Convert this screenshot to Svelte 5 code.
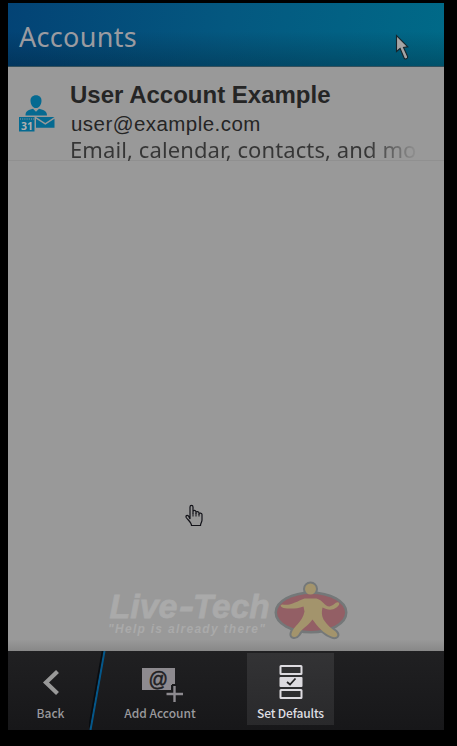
<script>
  const account = {
    name: 'User Account Example',
    email: 'user@example.com',
    services: 'Email, calendar, contacts, and mo'
  };
</script>

<div class="screen">
  <div class="phone">
    <header><h1>Accounts</h1></header>
    <main>
      <section class="account">
        <svg class="acct-icon" width="36" height="38" viewBox="0 0 36 38" fill="#056a91">
          <path d="M17 .3c3.500 0 5.700 2.300 5.500 5.600-.2 3.600-2.200 7.100-5.500 7.100s-5.300-3.500-5.500-7.100C11.300 2.600 13.500.3 17 .3z" />
          <path d="M6.500 20.500c0-4.500 2.500-5.500 7.500-6.800l3 3 3-3c5 1.300 8 2.300 8 6.800z" />
          <path d="M0 22h15.500v14.500H0z" />
          <path d="M17 22h18.500l-9.200 6z" />
          <path d="M17 23.800l9.300 6 9.200-6v9H17z" />
          <path d="M1 24h14" stroke="#999" stroke-width="1.200" stroke-dasharray="1 1.200" />
          <text x="2" y="34.500" textLength="12" lengthAdjust="spacingAndGlyphs" font-family="Open Sans, sans-serif" font-size="11" font-weight="700" fill="#b0b0b0">31</text>
        </svg>
        <div class="info">
          <div class="name">{account.name}</div>
          <div class="email">{account.email}</div>
          <div class="services">{account.services}</div>
        </div>
      </section>
      <svg class="brand" width="244" height="62" viewBox="0 0 244 62">
        <g font-family="Liberation Sans, Arial, sans-serif" font-weight="700" font-style="italic" fill="#aaa">
          <text x="3.500" y="38.500" font-size="34" textLength="68" lengthAdjust="spacingAndGlyphs" stroke="#aaa" stroke-width=".8">Live</text>
          <text x="73" y="38.500" font-size="34" textLength="15" lengthAdjust="spacingAndGlyphs" stroke="#aaa" stroke-width=".8">-</text>
          <text x="87" y="38.500" font-size="34" textLength="76.500" lengthAdjust="spacingAndGlyphs" stroke="#aaa" stroke-width=".8">Tech</text>
          <text x="2" y="54" font-size="12" textLength="157">"Help is already there"</text>
        </g>
        <g transform="translate(-.5 4)">
          <g fill="#747879" stroke="#747879" stroke-width="4" stroke-linejoin="round">
            <ellipse cx="205.500" cy="29.500" rx="34.500" ry="19" />
            <circle cx="205" cy="6" r="5.500" />
            <path d="M177 21.500c8 1.500 14-3 22-6h12c7 2 8 8 13 8 4-.5 6-5 9-4 2 1.500-.5 4-2 5-6 4-10 1.500-14 0-1 4-1 8 1 12 4 6 8 9 12 12 4 4 1 7-4 5-8-3-14-10-19-17-6 8-11 9-14 15-3 4-8 3-7-1 2-8 11-11 13-22l-1-5c-7 2.500-14 2.500-20 1.500-3-1-4-3-1-3.500z" />
          </g>
          <ellipse cx="205.500" cy="29.500" rx="34" ry="18.500" fill="#935f65" />
          <g fill="#a3946c">
            <circle cx="205" cy="6" r="5.500" />
            <path d="M177 21.500c8 1.500 14-3 22-6h12c7 2 8 8 13 8 4-.5 6-5 9-4 2 1.500-.5 4-2 5-6 4-10 1.500-14 0-1 4-1 8 1 12 4 6 8 9 12 12 4 4 1 7-4 5-8-3-14-10-19-17-6 8-11 9-14 15-3 4-8 3-7-1 2-8 11-11 13-22l-1-5c-7 2.500-14 2.500-20 1.500-3-1-4-3-1-3.500z" />
          </g>
        </g>
      </svg>
    </main>
    <footer>
      <svg class="divider" width="20" height="79" viewBox="0 0 20 79">
        <path d="M15.500 0L1.500 79" stroke="#04578a" stroke-width="2" />
        <path d="M13.500 0L0 76" stroke="#080c10" stroke-width="1.500" />
      </svg>
      <button class="back">
        <svg width="50" height="44" viewBox="0 0 50 44"><path d="M31.500 10.500L20 21.500l11.500 11" fill="none" stroke="#999" stroke-width="4.200" /></svg>
        <span>Back</span>
      </button>
      <button class="add">
        <svg width="50" height="44" viewBox="0 0 50 44">
          <path d="M7 7h33v17h-4v5H7z" fill="#8d8a8f" />
          <text x="13.500" y="24.500" textLength="19.500" lengthAdjust="spacingAndGlyphs" font-family="Liberation Sans, sans-serif" font-size="20" fill="#202022" stroke="#202022" stroke-width=".5">@</text>
          <path d="M39.500 23v17M31 32.500h17" stroke="#19191b" stroke-width="5" />
          <path d="M39.500 25v16M31.500 33h16.500" stroke="#8d8a8f" stroke-width="2.400" />
        </svg>
        <span>Add Account</span>
      </button>
      <button class="defaults">
        <svg width="50" height="46" viewBox="0 0 50 46">
          <g fill="none" stroke="#dddbe0" stroke-width="2">
            <rect x="14.500" y="13" width="21" height="8" rx=".5" />
            <rect x="14.500" y="37" width="21" height="8" rx=".5" />
          </g>
          <rect x="13.500" y="24" width="23" height="10" rx="1" fill="#dddbe0" />
          <path d="M21 29l3 2.500 5.500-6" fill="none" stroke="#242426" stroke-width="1.800" />
        </svg>
        <span>Set Defaults</span>
      </button>
    </footer>
  </div>

  <svg class="arrow" width="16" height="29" viewBox="0 0 16 29">
    <path d="M1.500 1.500v16l3.600-3 4 9.500c.7 2 4.200.5 3.500-1.500L8.500 13.500l4.300-.7z" fill="#a5a5a5" stroke="#17252b" stroke-width="1.100" />
  </svg>
  <svg class="hand" width="20" height="25" viewBox="0 0 20 25">
    <path d="M5 15V3c0-2.200 3-2.200 3 0v6.500V7.500c0-1.500 3-1.500 3 .5v2-1.500c0-1.500 3-1 3 .5v2-1c0-1.500 3-1 3 .5V16c0 2-1.500 3-1.500 5.500H6.500C6.500 18.500 3 16 1.200 13.500c-.8-2 1-2.500 2.300-1.500z" fill="#979797" stroke="#121218" stroke-width="1.200" />
    <path d="M8 9v3.500M11 9.500v3M14 10.500v2" stroke="#121218" />
  </svg>
</div>

<style>
  .screen {
    position: relative;
    box-sizing: border-box;
    width: 457px;
    height: 746px;
    padding: 3px 13px 16px 8px;
    background: #000;
    overflow: hidden;
  }
  .phone {
    display: flex;
    flex-direction: column;
    height: 727px;
  }
  header {
    box-sizing: border-box;
    height: 64px;
    padding-left: 11px;
    background:
      linear-gradient(rgba(0, 0, 0, 0) 45%, rgba(0, 10, 20, .25)),
      linear-gradient(100deg, #034375, #045880 50%, #006a88);
    border-bottom: 1px solid #34505c;
  }
  h1 {
    margin: 0;
    font: 400 27px/67px "Noto Sans", sans-serif;
    letter-spacing: .3px;
    color: #9b9ba0;
    white-space: nowrap;
  }
  main {
    flex: 1;
    display: flex;
    flex-direction: column;
    justify-content: space-between;
    background: linear-gradient(#999 98%, #888);
  }
  .account {
    display: flex;
    box-sizing: border-box;
    height: 94px;
    border-bottom: 1px solid #909090;
  }
  .acct-icon {
    margin: 28px 0 0 11px;
    flex: none;
  }
  .info {
    margin: 12px 27px -10px 15px;
    flex: 1;
    min-width: 0;
    color: #252525;
    white-space: nowrap;
  }
  .name {
    font: 700 24px/32px "Liberation Sans", Arial, sans-serif;
  }
  .email {
    padding-left: 1px;
    font: 400 20.500px/26px "Liberation Sans", Arial, sans-serif;
    letter-spacing: .45px;
  }
  .services {
    font: 400 22px/25px "Noto Sans", sans-serif;
    letter-spacing: .1px;
    color: transparent;
    background: linear-gradient(90deg, #363636 86%, #999 101%);
    background-clip: text;
  }
  .brand {
    margin: 0 0 10px 98px;
    flex: none;
  }
  footer {
    position: relative;
    display: flex;
    height: 79px;
    background: linear-gradient(#202022, #171719);
  }
  .divider {
    position: absolute;
    left: 81px;
    top: 0;
  }
  button {
    display: flex;
    flex-direction: column;
    align-items: center;
    box-sizing: border-box;
    padding: 10px 0 0;
    border: 0;
    background: none;
    color: #9a999d;
    font: 500 12px/15px "Noto Sans CJK SC", "Noto Sans", sans-serif;
    white-space: nowrap;
  }
  span {
    display: block;
  }
  .back {
    width: 85px;
  }
  .add {
    width: 134px;
    margin-right: 20px;
  }
  .defaults {
    width: 87px;
    height: 72px;
    margin-top: 2px;
    padding-top: 0;
    background: linear-gradient(#333335, #29292b);
    color: #dfdee2;
  }
  .defaults span {
    margin-top: 6px;
    letter-spacing: -.15px;
  }
  .arrow {
    position: absolute;
    left: 395px;
    top: 34px;
  }
  .hand {
    position: absolute;
    left: 184.500px;
    top: 504px;
  }
</style>
